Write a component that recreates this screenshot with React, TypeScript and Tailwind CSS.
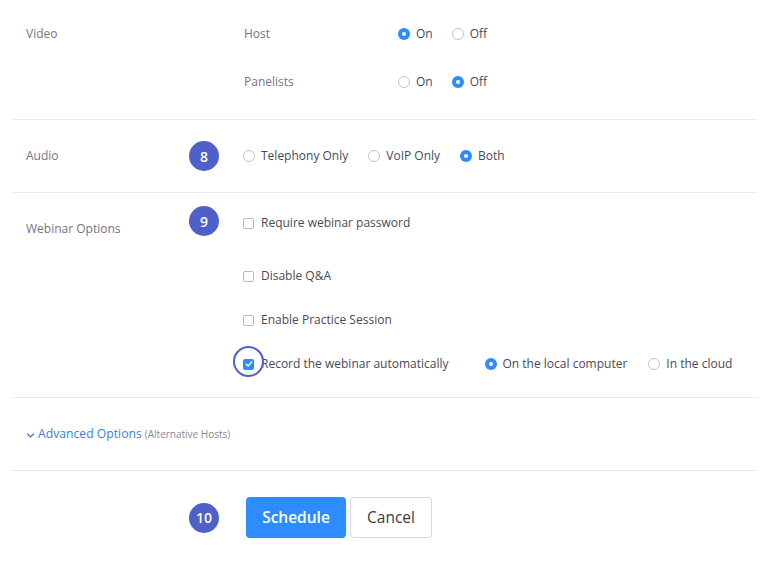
import React from "react";

const font = { fontFamily: '"Open Sans", "Liberation Sans", sans-serif' };

function Radio({ checked, label }: { checked?: boolean; label: string }) {
  return (
    <label className="flex items-center gap-[6px] text-[12px] text-[#4a4a55]">
      {checked ? (
        <span className="flex h-[12px] w-[12px] items-center justify-center rounded-full bg-[#2d8cff]">
          <span className="h-[4px] w-[4px] rounded-full bg-white" />
        </span>
      ) : (
        <span className="h-[12px] w-[12px] rounded-full border border-[#c4c4cc] bg-white" />
      )}
      <span>{label}</span>
    </label>
  );
}

function Checkbox({ checked, label }: { checked?: boolean; label: string }) {
  return (
    <label className="flex items-center gap-[7px] text-[12px] text-[#4a4a55]">
      {checked ? (
        <span className="flex h-[11px] w-[11px] items-center justify-center rounded-[2px] bg-[#2d8cff]">
          <svg width="8" height="8" viewBox="0 0 8 8" fill="none">
            <path d="M1.2 4.2 3.2 6 6.8 1.8" stroke="white" strokeWidth="1.4" strokeLinecap="round" strokeLinejoin="round" />
          </svg>
        </span>
      ) : (
        <span className="h-[11px] w-[11px] rounded-[2px] border border-[#b8b8c0] bg-white" />
      )}
      <span>{label}</span>
    </label>
  );
}

function Badge({ n }: { n: number }) {
  return (
    <div className="flex h-[30px] w-[30px] items-center justify-center rounded-full bg-[#5060c9] text-[14px] font-semibold text-white">
      {n}
    </div>
  );
}

export default function App() {
  return (
    <div className="min-h-[575px] w-[770px] bg-white pt-[1px]" style={font}>
      {/* Video */}
      <div className="flex pl-[26px] pr-[5px] pt-[9px] pb-[13px]">
        <div className="flex h-[48px] w-[218px] items-center text-[12px] text-[#747480]">Video</div>
        <div className="flex flex-col">
          <div className="flex h-[48px] items-center">
            <div className="w-[154px] text-[12px] text-[#747480]">Host</div>
            <div className="flex items-center gap-[19px]">
              <Radio checked label="On" />
              <Radio label="Off" />
            </div>
          </div>
          <div className="flex h-[48px] items-center">
            <div className="w-[154px] text-[12px] text-[#747480]">Panelists</div>
            <div className="flex items-center gap-[19px]">
              <Radio label="On" />
              <Radio checked label="Off" />
            </div>
          </div>
        </div>
      </div>

      <div className="mx-[12px] border-t border-[#ececec]" />

      {/* Audio */}
      <div className="flex h-[72px] items-center pl-[26px]">
        <div className="w-[163px] text-[12px] text-[#747480]">Audio</div>
        <div className="w-[30px]">
          <Badge n={8} />
        </div>
        <div className="ml-[24px] flex items-center gap-[20px]">
          <Radio label="Telephony Only" />
          <Radio label="VoIP Only" />
          <Radio checked label="Both" />
        </div>
      </div>

      <div className="mx-[12px] border-t border-[#ececec]" />

      {/* Webinar Options */}
      <div className="flex pl-[26px] pt-[8px] pb-[11px]">
        <div className="w-[163px] pt-[19px] text-[12px] leading-[18px] text-[#747480]">Webinar Options</div>
        <div className="w-[30px] pt-[5px]">
          <Badge n={9} />
        </div>
        <div className="ml-[24px] flex flex-col">
          <div className="flex h-[44px] items-center">
            <Checkbox label="Require webinar password" />
          </div>
          <div className="mt-[9px] flex h-[44px] items-center">
            <Checkbox label="Disable Q&A" />
          </div>
          <div className="flex h-[44px] items-center">
            <Checkbox label="Enable Practice Session" />
          </div>
          <div className="flex h-[44px] items-center">
            <div className="relative">
              <Checkbox checked label="Record the webinar automatically" />
              <span className="absolute left-[-10px] top-[-9px] h-[31px] w-[31px] rounded-full border-[2.5px] border-[#5060c9]" />
            </div>
            <div className="ml-[36px] flex items-center gap-[21px]">
              <Radio checked label="On the local computer" />
              <Radio label="In the cloud" />
            </div>
          </div>
        </div>
      </div>

      <div className="mx-[12px] border-t border-[#ececec]" />

      {/* Advanced */}
      <div className="flex h-[72px] items-center pl-[26px]">
        <svg width="9" height="9" viewBox="0 0 9 9" fill="none" className="mr-[3px] mt-[2px]">
          <path d="M1.5 3 4.5 6 7.5 3" stroke="#3a7fd6" strokeWidth="1.3" strokeLinecap="round" strokeLinejoin="round" />
        </svg>
        <span className="text-[12.2px] text-[#3a7fd6]">Advanced Options</span>
        <span className="ml-[3px] text-[10px] text-[#888890]">(Alternative Hosts)</span>
      </div>

      <div className="mx-[12px] border-t border-[#ececec]" />

      {/* Actions */}
      <div className="flex items-center pl-[189px] pt-[26px] pb-[20px]">
        <Badge n={10} />
        <div className="ml-[27px] flex items-center gap-[4px]">
          <button className="h-[41px] w-[100px] rounded-[4px] bg-[#2d8cff] text-[15.5px] font-semibold text-white">
            Schedule
          </button>
          <button className="h-[41px] w-[82px] rounded-[4px] border border-[#d8d8dc] bg-white text-[15.5px] text-[#3b3b42]">
            Cancel
          </button>
        </div>
      </div>
    </div>
  );
}
